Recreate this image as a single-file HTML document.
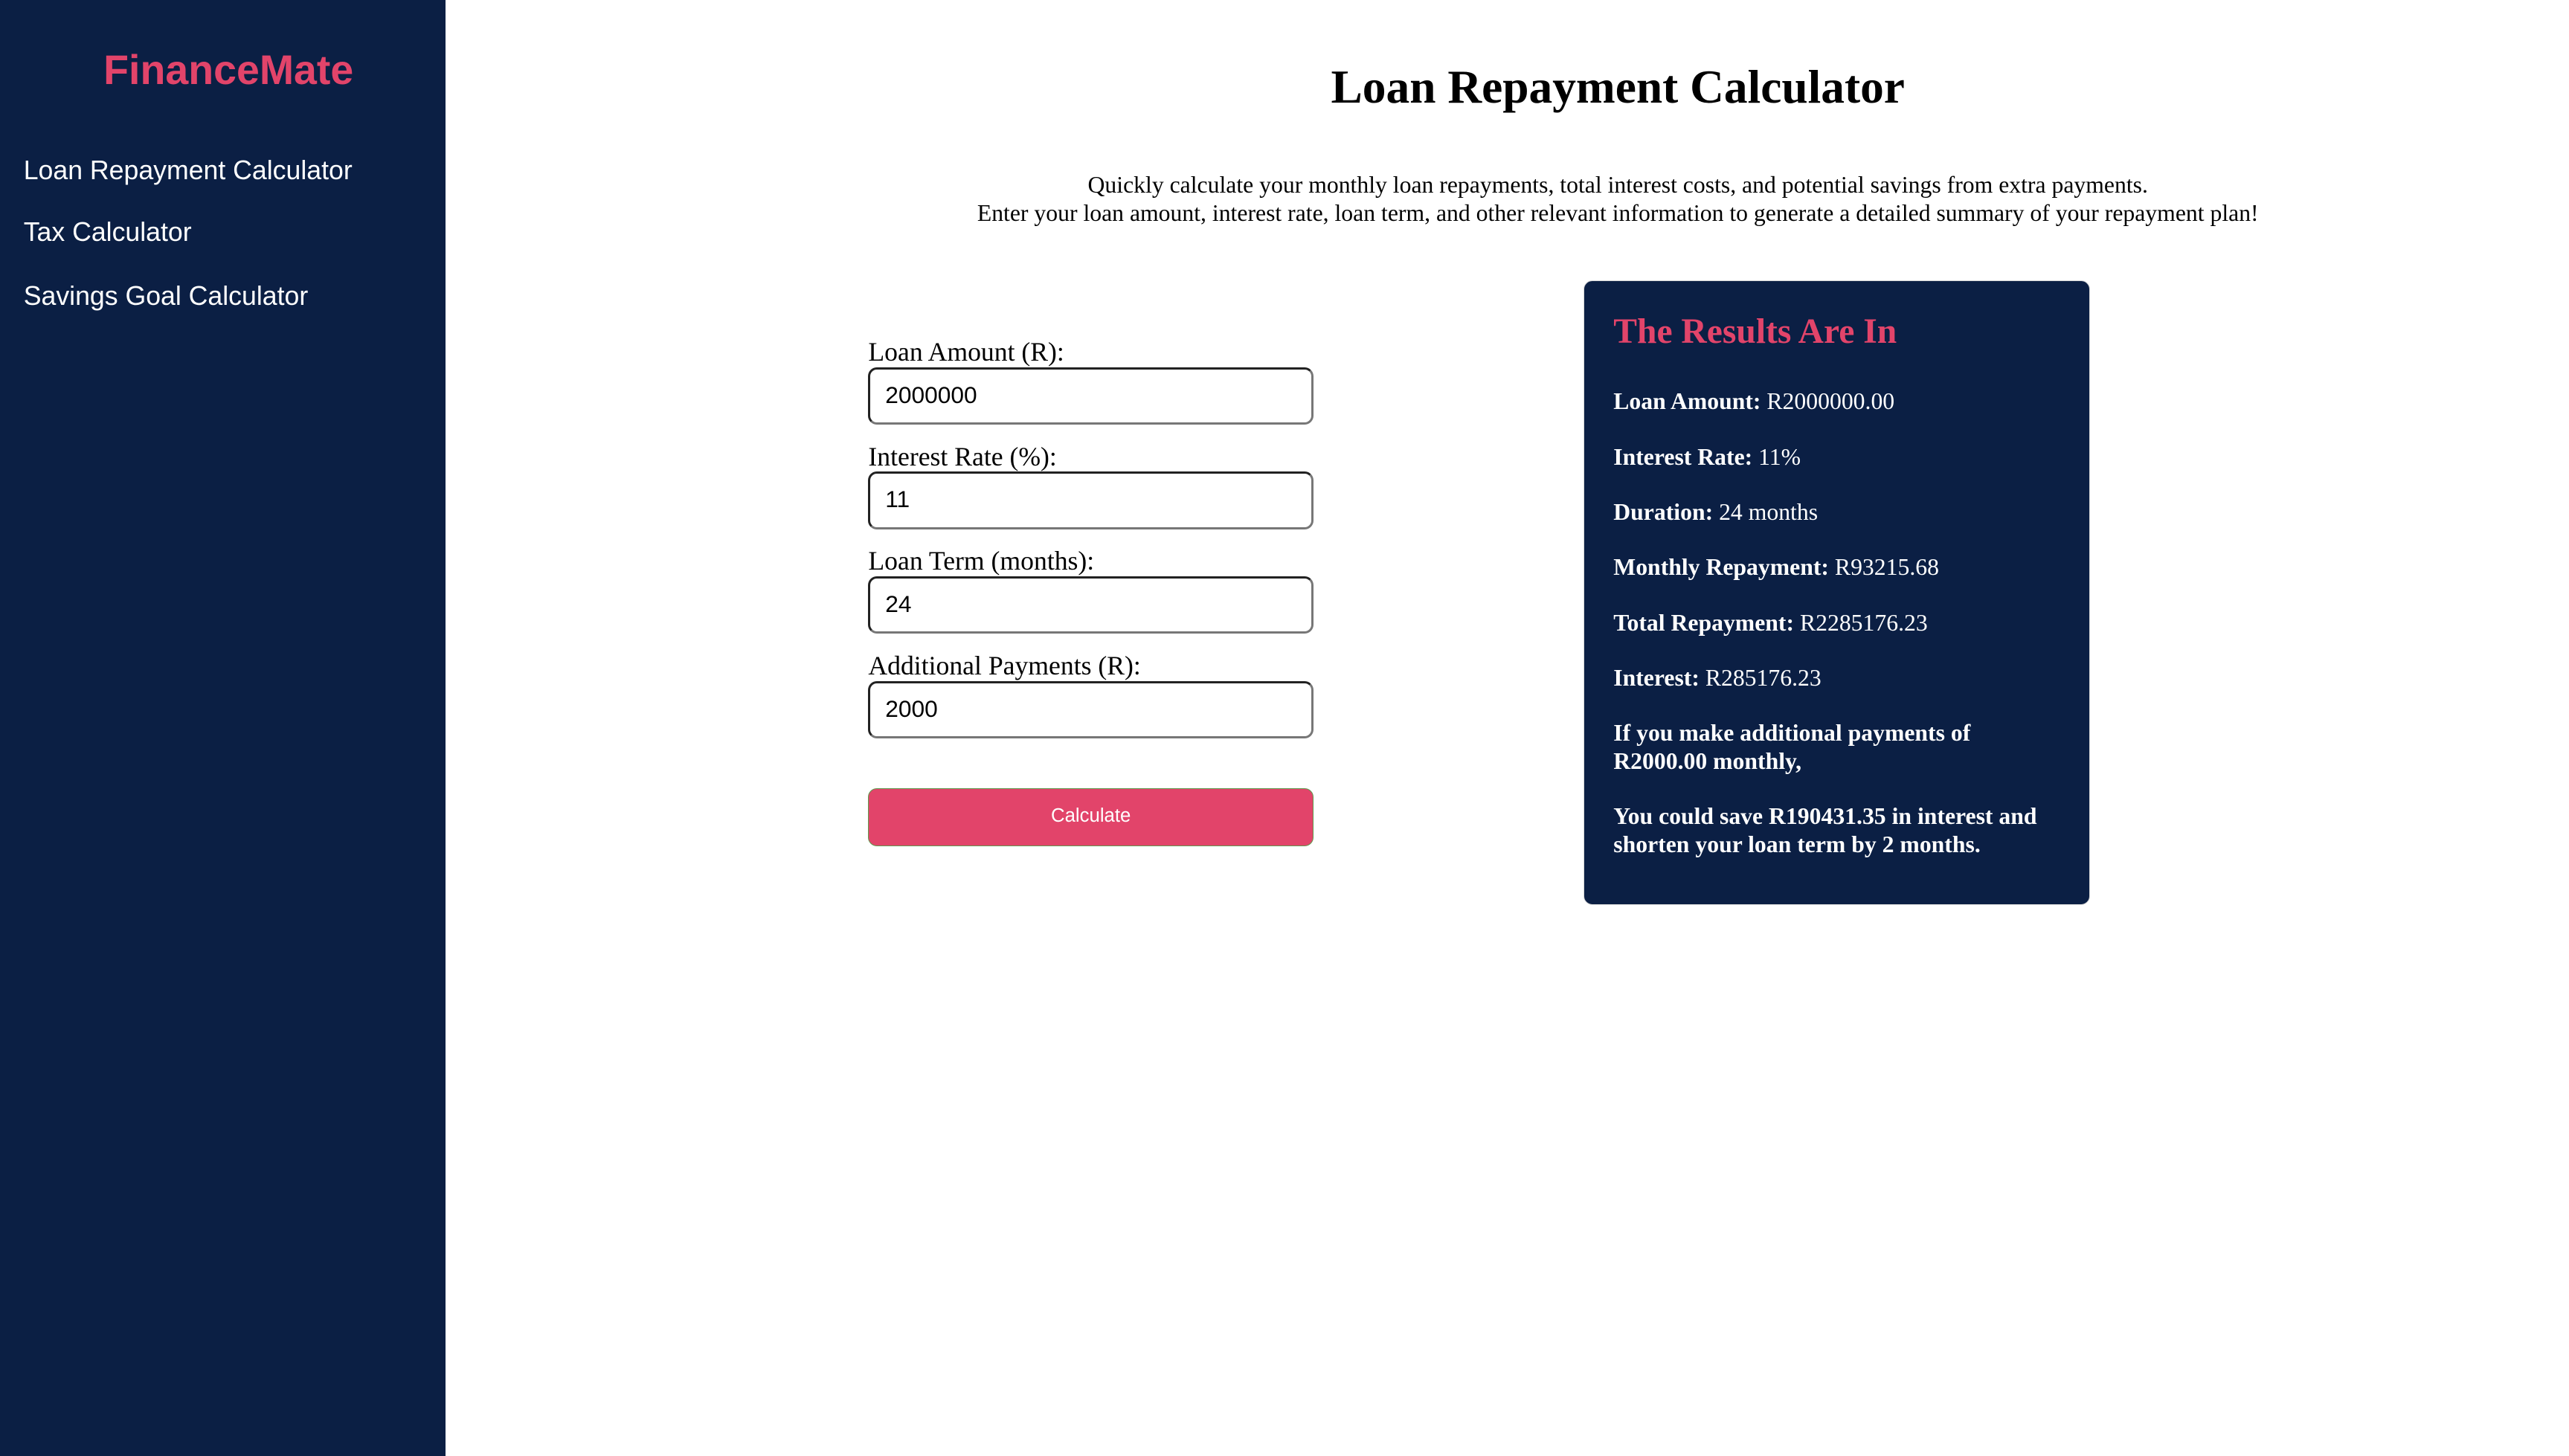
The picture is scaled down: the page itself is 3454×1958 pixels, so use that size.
<!DOCTYPE html>
<html><head><meta charset="utf-8"><style>
html,body{margin:0;padding:0}
html{background:#fff}
body{width:1743px;height:988px;zoom:1.982;position:relative;background:#fff;overflow:hidden;font-family:"Liberation Serif",serif}
.side{position:absolute;left:0;top:0;width:302px;height:988px;background:#0b1f44}
.brand{position:absolute;left:0;width:310px;top:31px;text-align:center;font:bold 28px/34px "Liberation Sans",sans-serif;color:#e2446a}
.nav{position:absolute;left:16px;font:18px/22px "Liberation Sans",sans-serif;color:#fff;white-space:nowrap}
h1{position:absolute;left:468px;width:1259px;top:40px;margin:0;text-align:center;font:bold 32px/38px "Liberation Serif",serif}
.intro{position:absolute;left:468px;width:1259px;top:116px;text-align:center;font:16px/19px "Liberation Serif",serif}
.lbl{position:absolute;left:589px;font:18px/20px "Liberation Serif",serif}
.inp{position:absolute;left:589px;width:302px;height:39px;box-sizing:border-box;border:2px solid;border-color:#222 #777 #777 #222;border-radius:6px;font:16px/35px "Liberation Sans",sans-serif;padding-left:10px;color:#000}
.btn{position:absolute;left:589px;top:535px;width:302px;height:39px;box-sizing:border-box;background:#e2446a;border:1px solid #5f9a4e;border-radius:6px;color:#fff;text-align:center;font:13px/37px "Liberation Sans",sans-serif}
.card{position:absolute;left:1074px;top:190px;width:344px;height:424px;box-sizing:border-box;background:#0b1f44;border-radius:6px;padding:21px 20px;color:#fff;border:1px solid #d8d8d8}
.card h2{margin:0 0 23.5px;font:bold 24px/28px "Liberation Serif",serif;color:#e2446a}
.card p{margin:0 0 18.5px;font:16px/19px "Liberation Serif",serif}
</style></head><body>
<div class="side">
<div class="brand">FinanceMate</div>
<div class="nav" style="top:105px">Loan Repayment Calculator</div>
<div class="nav" style="top:147px">Tax Calculator</div>
<div class="nav" style="top:190px">Savings Goal Calculator</div>
</div>
<h1>Loan Repayment Calculator</h1>
<div class="intro">Quickly calculate your monthly loan repayments, total interest costs, and potential savings from extra payments.<br>Enter your loan amount, interest rate, loan term, and other relevant information to generate a detailed summary of your repayment plan!</div>
<div class="lbl" style="top:229px">Loan Amount (R):</div>
<div class="inp" style="top:249px">2000000</div>
<div class="lbl" style="top:300px">Interest Rate (%):</div>
<div class="inp" style="top:320px">11</div>
<div class="lbl" style="top:371px">Loan Term (months):</div>
<div class="inp" style="top:391px">24</div>
<div class="lbl" style="top:442px">Additional Payments (R):</div>
<div class="inp" style="top:462px">2000</div>
<div class="btn">Calculate</div>
<div class="card">
<h2>The Results Are In</h2>
<p><b>Loan Amount:</b> R2000000.00</p>
<p><b>Interest Rate:</b> 11%</p>
<p><b>Duration:</b> 24 months</p>
<p><b>Monthly Repayment:</b> R93215.68</p>
<p><b>Total Repayment:</b> R2285176.23</p>
<p><b>Interest:</b> R285176.23</p>
<p><b>If you make additional payments of R2000.00 monthly,</b></p>
<p><b>You could save R190431.35 in interest and shorten your loan term by 2 months.</b></p>
</div>
</body></html>
